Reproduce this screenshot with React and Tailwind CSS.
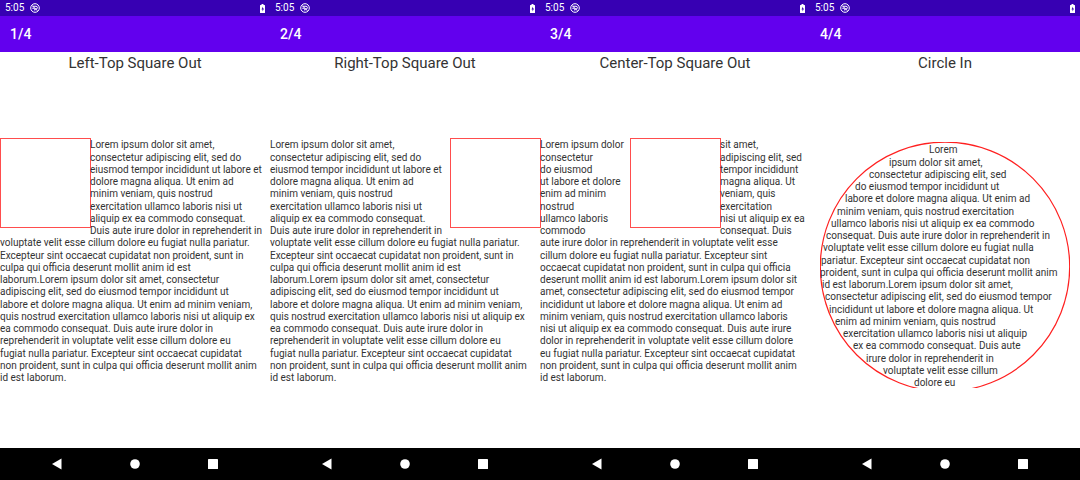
import React from "react";

const WRAPPED_TAIL = [
  "voluptate velit esse cillum dolore eu fugiat nulla pariatur.",
  "Excepteur sint occaecat cupidatat non proident, sunt in",
  "culpa qui officia deserunt mollit anim id est",
  "laborum.Lorem ipsum dolor sit amet, consectetur",
  "adipiscing elit, sed do eiusmod tempor incididunt ut",
  "labore et dolore magna aliqua. Ut enim ad minim veniam,",
  "quis nostrud exercitation ullamco laboris nisi ut aliquip ex",
  "ea commodo consequat. Duis aute irure dolor in",
  "reprehenderit in voluptate velit esse cillum dolore eu",
  "fugiat nulla pariatur. Excepteur sint occaecat cupidatat",
  "non proident, sunt in culpa qui officia deserunt mollit anim",
  "id est laborum.",
];

const BESIDE_SQUARE = [
  "Lorem ipsum dolor sit amet,",
  "consectetur adipiscing elit, sed do",
  "eiusmod tempor incididunt ut labore et",
  "dolore magna aliqua. Ut enim ad",
  "minim veniam, quis nostrud",
  "exercitation ullamco laboris nisi ut",
  "aliquip ex ea commodo consequat.",
  "Duis aute irure dolor in reprehenderit in",
];

const CENTER_LEFT = [
  "Lorem ipsum dolor",
  "consectetur",
  "do eiusmod",
  "ut labore et dolore",
  "enim ad minim",
  "nostrud",
  "ullamco laboris",
  "commodo",
];

const CENTER_RIGHT = [
  "sit amet,",
  "adipiscing elit, sed",
  "tempor incididunt",
  "magna aliqua. Ut",
  "veniam, quis",
  "exercitation",
  "nisi ut aliquip ex ea",
  "consequat. Duis",
];

const CENTER_TAIL = [
  "aute irure dolor in reprehenderit in voluptate velit esse",
  "cillum dolore eu fugiat nulla pariatur. Excepteur sint",
  "occaecat cupidatat non proident, sunt in culpa qui officia",
  "deserunt mollit anim id est laborum.Lorem ipsum dolor sit",
  "amet, consectetur adipiscing elit, sed do eiusmod tempor",
  "incididunt ut labore et dolore magna aliqua. Ut enim ad",
  "minim veniam, quis nostrud exercitation ullamco laboris",
  "nisi ut aliquip ex ea commodo consequat. Duis aute irure",
  "dolor in reprehenderit in voluptate velit esse cillum dolore",
  "eu fugiat nulla pariatur. Excepteur sint occaecat cupidatat",
  "non proident, sunt in culpa qui officia deserunt mollit anim",
  "id est laborum.",
];

const CIRCLE_LINES = [
  "Lorem",
  "ipsum dolor sit amet,",
  "consectetur adipiscing elit, sed",
  "do eiusmod tempor incididunt ut",
  "labore et dolore magna aliqua. Ut enim ad",
  "minim veniam, quis nostrud exercitation",
  "ullamco laboris nisi ut aliquip ex ea commodo",
  "consequat. Duis aute irure dolor in reprehenderit in",
  "voluptate velit esse cillum dolore eu fugiat nulla",
  "pariatur. Excepteur sint occaecat cupidatat non",
  "proident, sunt in culpa qui officia deserunt mollit anim",
  "id est laborum.Lorem ipsum dolor sit amet,",
  "consectetur adipiscing elit, sed do eiusmod tempor",
  "incididunt ut labore et dolore magna aliqua. Ut",
  "enim ad minim veniam, quis nostrud",
  "exercitation ullamco laboris nisi ut aliquip",
  "ex ea commodo consequat. Duis aute",
  "irure dolor in reprehenderit in",
  "voluptate velit esse cillum",
  "dolore eu",
];

const RADIUS = 125;
const TEXT_TOP = 1;
const TEXT_HEIGHT = 245;

// Left edge of a row inside the circle, taken where the row is narrowest.
function circleIndent(index) {
  const pitch = TEXT_HEIGHT / CIRCLE_LINES.length;
  const top = TEXT_TOP + index * pitch - RADIUS;
  const reach = Math.max(Math.abs(top), Math.abs(top + pitch));
  return Math.round(RADIUS - Math.sqrt(Math.max(0, RADIUS * RADIUS - reach * reach)));
}

function Lines({ lines, className = "" }) {
  return (
    <div className={`grid auto-rows-fr items-end whitespace-nowrap ${className}`}>
      {lines.map((line, i) => (
        <span key={i}>{line}</span>
      ))}
    </div>
  );
}

function Square() {
  return <div className="h-[90px] w-[91px] border border-[#ff4d4d]" />;
}

function LeftSquare() {
  return (
    <div className="pt-16">
      <div className="grid h-[98px] grid-cols-[90px_1fr]">
        <Square />
        <Lines lines={BESIDE_SQUARE} />
      </div>
      <Lines lines={WRAPPED_TAIL} className="h-[147px]" />
    </div>
  );
}

function RightSquare() {
  return (
    <div className="pt-16">
      <div className="grid h-[98px] grid-cols-[1fr_90px]">
        <Lines lines={BESIDE_SQUARE} />
        <Square />
      </div>
      <Lines lines={WRAPPED_TAIL} className="h-[147px]" />
    </div>
  );
}

function CenterSquare() {
  return (
    <div className="pt-16">
      <div className="grid h-[98px] grid-cols-[1fr_90px_1fr]">
        <Lines lines={CENTER_LEFT} />
        <Square />
        <Lines lines={CENTER_RIGHT} />
      </div>
      <Lines lines={CENTER_TAIL} className="h-[147px]" />
    </div>
  );
}

function CircleIn() {
  return (
    <div className="flex justify-center pt-[68px]">
      <div className="grid w-[250px] overflow-hidden">
        <svg
          className="col-start-1 row-start-1 h-[246px] w-[250px]"
          viewBox="0 0 250 246"
          fill="none"
          aria-hidden="true"
        >
          <circle cx="125" cy="124.8" r="124.7" stroke="#ff2020" strokeWidth="1.2" />
        </svg>
        <div className="col-start-1 row-start-1 mt-px grid h-[245px] auto-rows-fr items-end whitespace-nowrap">
          {CIRCLE_LINES.map((line, i) => (
            <span key={i} style={{ paddingLeft: circleIndent(i) }}>
              {line}
            </span>
          ))}
        </div>
      </div>
    </div>
  );
}

function StatusBar() {
  return (
    <div className="flex h-4 items-center bg-[#3700b3] px-[5px] text-white">
      <span className="text-[10px] leading-4">5:05</span>
      <svg className="ml-[6px] size-[10px]" viewBox="0 0 20 20" fill="none" stroke="#fff" strokeWidth="2" aria-hidden="true">
        <circle cx="10" cy="10" r="8.6" />
        <path d="M5 6.5h7a2.7 2.7 0 0 1 0 5.6H9.5V15M4.5 10.5h5M5 6l10 9.5" />
      </svg>
      <svg className="ml-auto h-[9px] w-[5px]" viewBox="0 0 10 18" aria-hidden="true">
        <path d="M3 0h4v2h2a1 1 0 0 1 1 1v14a1 1 0 0 1-1 1H1a1 1 0 0 1-1-1V3a1 1 0 0 1 1-1h2z" fill="#fff" />
        <path d="M6 5 3 11h2v4l3-6H6z" fill="#3700b3" />
      </svg>
    </div>
  );
}

function NavBar() {
  return (
    <nav className="flex h-8 items-center justify-around bg-black px-[18px]">
      <button type="button" aria-label="Back" className="grid size-6 place-items-center">
        <svg className="h-3 w-[10px]" viewBox="0 0 10 12" fill="#fff">
          <path d="M9.5 .5v11L0 6z" />
        </svg>
      </button>
      <button type="button" aria-label="Home" className="grid size-6 place-items-center">
        <svg className="size-[10px]" viewBox="0 0 10 10" fill="#fff">
          <circle cx="5" cy="5" r="4.8" />
        </svg>
      </button>
      <button type="button" aria-label="Overview" className="grid size-6 place-items-center">
        <svg className="size-[10px]" viewBox="0 0 10 10" fill="#fff">
          <rect width="10" height="10" rx=".6" />
        </svg>
      </button>
    </nav>
  );
}

function Screen({ step, title, children }) {
  return (
    <section className="flex min-w-0 flex-col">
      <StatusBar />
      <header className="flex h-9 items-center bg-[#6200ee] px-[10px] pt-px text-[14px] font-medium text-white">
        {step}
      </header>
      <div className="flex-1 text-[10px] leading-[11px] text-[#333]">
        <h2 className="pt-px text-center text-[15px] leading-[21px]">{title}</h2>
        {children}
      </div>
      <NavBar />
    </section>
  );
}

export default function App() {
  return (
    <main className="grid min-h-screen grid-cols-4 overflow-hidden bg-white font-['Roboto',sans-serif]">
      <Screen step="1/4" title="Left-Top Square Out">
        <LeftSquare />
      </Screen>
      <Screen step="2/4" title="Right-Top Square Out">
        <RightSquare />
      </Screen>
      <Screen step="3/4" title="Center-Top Square Out">
        <CenterSquare />
      </Screen>
      <Screen step="4/4" title="Circle In">
        <CircleIn />
      </Screen>
    </main>
  );
}
